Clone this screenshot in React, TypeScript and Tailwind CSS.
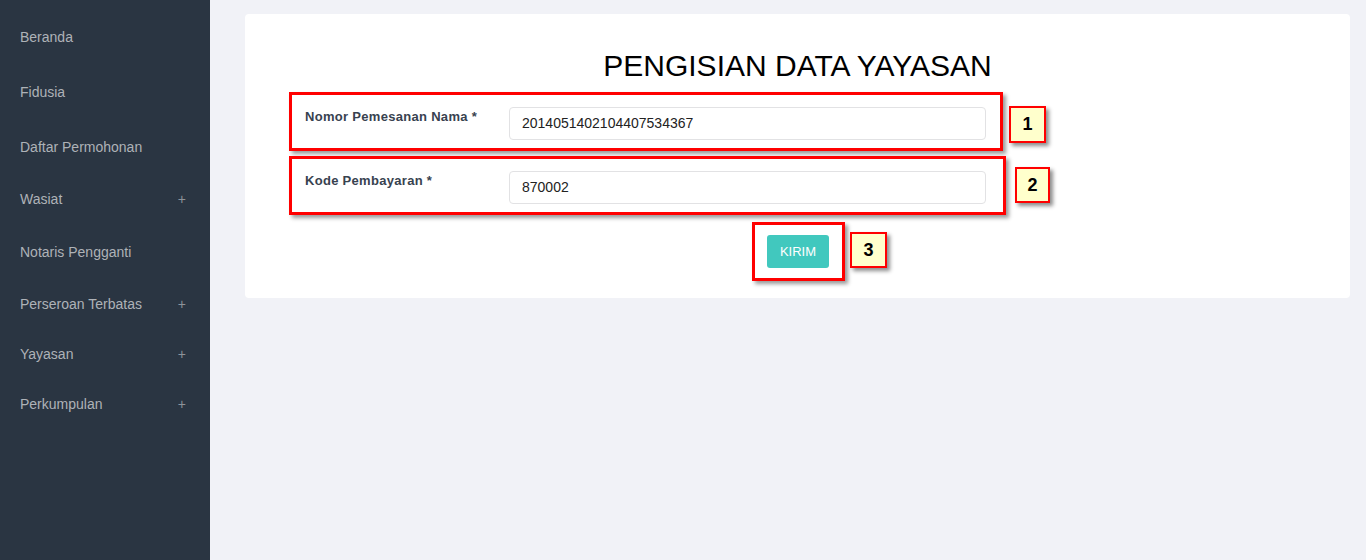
import React from "react";

const menu: { label: string; h: number; plus?: boolean }[] = [
  { label: "Beranda", h: 55 },
  { label: "Fidusia", h: 55 },
  { label: "Daftar Permohonan", h: 54 },
  { label: "Wasiat", h: 51, plus: true },
  { label: "Notaris Pengganti", h: 54 },
  { label: "Perseroan Terbatas", h: 50, plus: true },
  { label: "Yayasan", h: 50, plus: true },
  { label: "Perkumpulan", h: 50, plus: true },
];

function Badge({ n, className }: { n: string; className: string }) {
  return (
    <div
      className={
        "flex items-center justify-center border-2 border-[#ff0000] bg-[#ffffcc] text-[18px] font-bold text-black shadow-[3px_3px_4px_rgba(0,0,0,0.45)] " +
        className
      }
    >
      {n}
    </div>
  );
}

export default function App() {
  return (
    <div
      className="flex h-[560px] w-full"
      style={{ fontFamily: '"Liberation Sans", Arial, sans-serif' }}
    >
      <aside className="w-[210px] shrink-0 bg-[#2a3542] pt-[10px]">
        {menu.map((m) => (
          <div
            key={m.label}
            className="flex items-center justify-between pl-[20px] pr-[24px] text-[14px] text-[#aeb2b7]"
            style={{ height: m.h }}
          >
            <span>{m.label}</span>
            {m.plus && <span className="text-[14px] text-[#8d939a]">+</span>}
          </div>
        ))}
      </aside>
      <main className="flex-1 bg-[#f1f2f7] pl-[35px] pr-[16px] pt-[14px]">
        <div className="rounded-[4px] bg-white pb-[17px] pt-[30px]">
          <h1 className="h-[44px] text-center text-[30px] leading-[44px] text-black">
            PENGISIAN DATA YAYASAN
          </h1>
          <div className="mt-[4px] flex items-start pl-[44px]">
            <div className="flex h-[59px] w-[714px] items-start border-[3px] border-[#ff0000] pl-[13px] pr-[14px] pt-[12px] shadow-[3px_3px_4px_rgba(0,0,0,0.4)]">
              <label className="w-[204px] text-[13px] font-bold tracking-[0.3px] text-[#38424f]">
                Nomor Pemesanan Nama *
              </label>
              <div className="flex h-[33px] flex-1 items-center rounded-[4px] border border-[#e2e2e4] px-[12px] text-[14px] text-[#222]">
                2014051402104407534367
              </div>
            </div>
            <Badge n="1" className="ml-[6px] mt-[14px] h-[37px] w-[37px]" />
          </div>
          <div className="mt-[5px] flex items-start pl-[44px]">
            <div className="flex h-[59px] w-[717px] items-start border-[3px] border-[#ff0000] pl-[13px] pr-[17px] pt-[12px] shadow-[3px_3px_4px_rgba(0,0,0,0.4)]">
              <label className="w-[204px] text-[13px] font-bold tracking-[0.3px] text-[#38424f]">
                Kode Pembayaran *
              </label>
              <div className="flex h-[33px] flex-1 items-center rounded-[4px] border border-[#e2e2e4] px-[12px] text-[14px] text-[#222]">
                870002
              </div>
            </div>
            <Badge n="2" className="ml-[9px] mt-[11px] h-[36px] w-[35px]" />
          </div>
          <div className="mt-[7px] flex items-start pl-[507px]">
            <div className="h-[59px] w-[93px] border-[3px] border-[#ff0000] pl-[12px] pt-[10px] shadow-[3px_3px_4px_rgba(0,0,0,0.4)]">
              <button className="h-[33px] w-[62px] rounded-[3px] bg-[#41c8be] text-[13px] text-white">
                KIRIM
              </button>
            </div>
            <Badge n="3" className="ml-[5px] mt-[10px] h-[36px] w-[37px]" />
          </div>
        </div>
      </main>
    </div>
  );
}
